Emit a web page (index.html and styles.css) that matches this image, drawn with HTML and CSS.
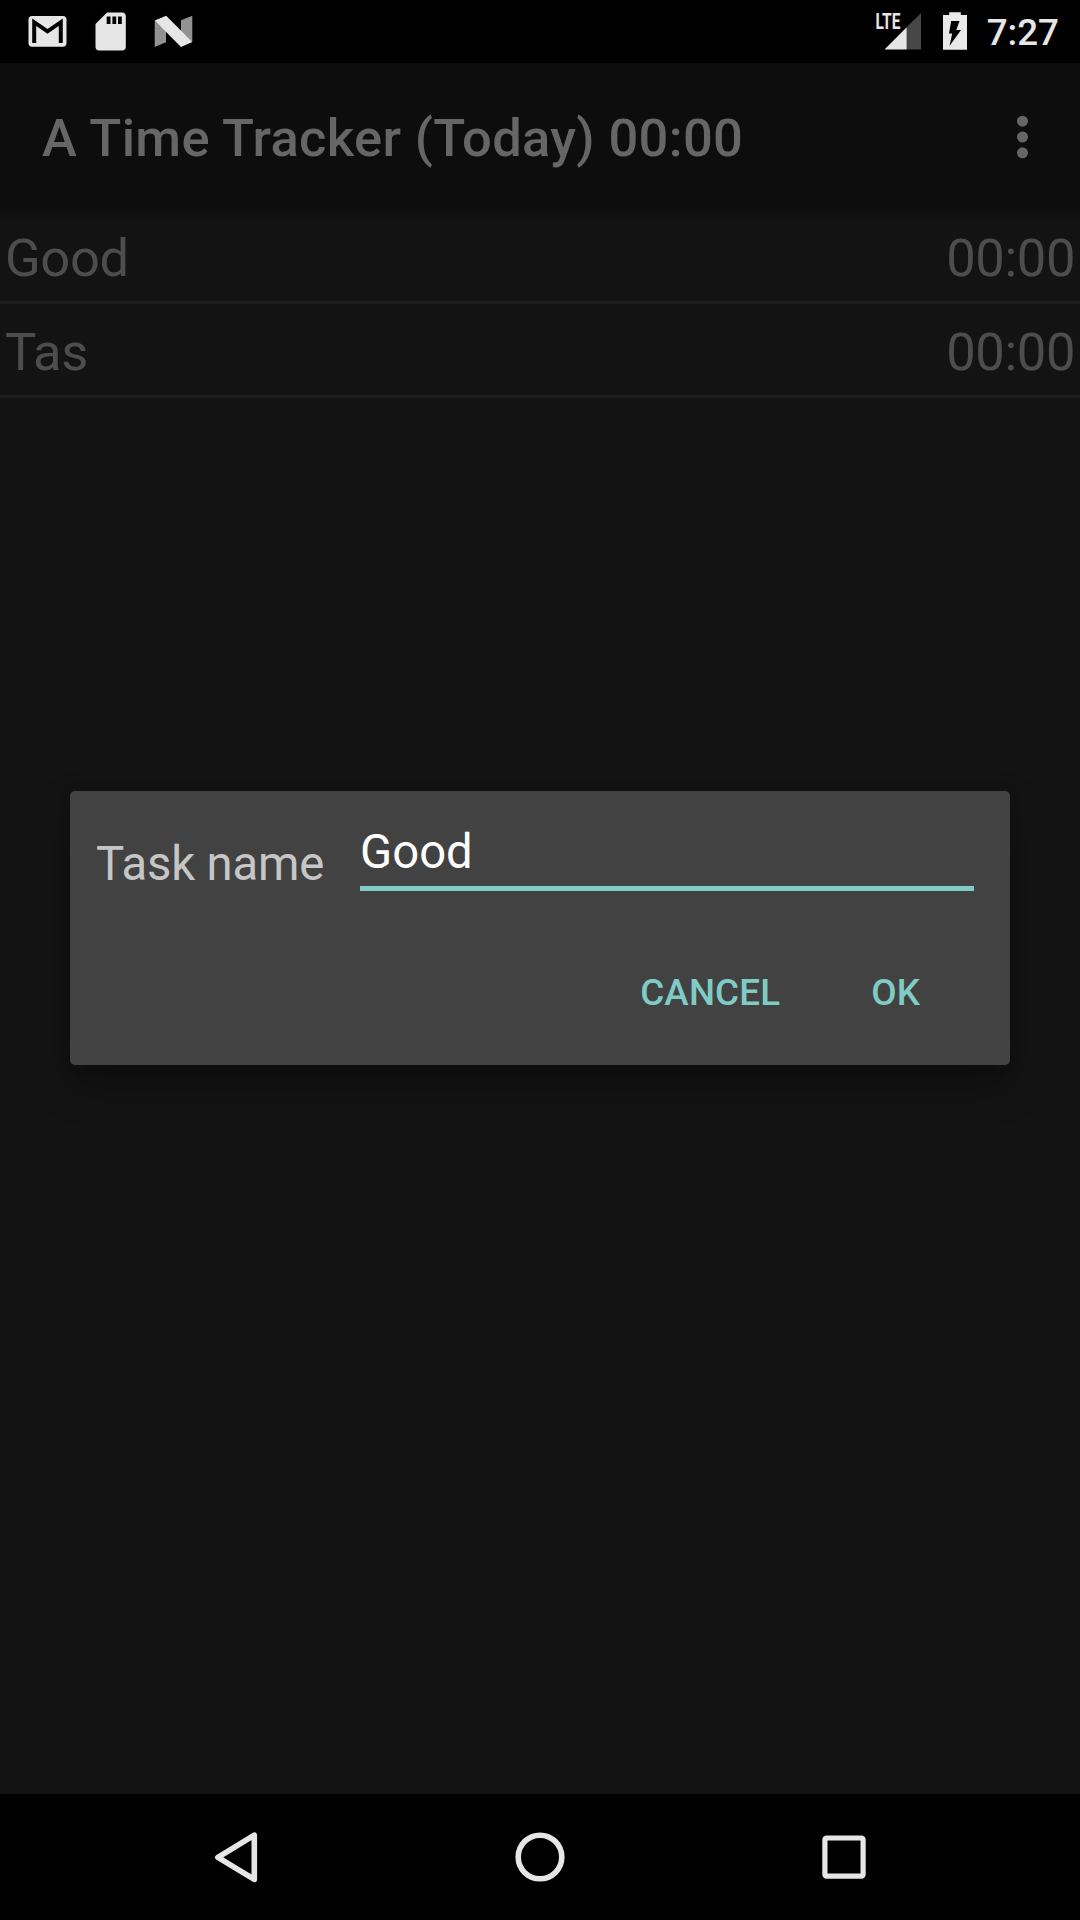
FILE: index.html
```html
<!DOCTYPE html>
<html lang="en">
<head>
<meta charset="utf-8">
<title>A Time Tracker</title>
<link rel="stylesheet" href="styles.css">
</head>
<body>
<div class="screen">
  <header class="status">
    <svg width="210" height="63" viewBox="0 0 210 63" aria-hidden="true">
      <rect x="28.5" y="16" width="38" height="30.7" rx="3.6" fill="#e6e6e6"/>
      <path d="M34.2 43V22.2L47.5 31.4L60.8 22.2V43" fill="none" stroke="#000" stroke-width="4"/>
      <path d="M107 12.5H122Q125.8 12.5 125.8 16.3V46.7Q125.8 50.5 122 50.5H99.3Q95.5 50.5 95.5 46.7V24Z" fill="#e6e6e6"/>
      <path d="M106.7 16.5H110.5V24H106.7ZM112.4 16.5H116.2V24H112.4ZM118 16.5H121.8V24H118Z" fill="#000"/>
      <path d="M154.7 20.5L166 31V42.3L154.7 47ZM181 20.3L192.3 15.8V42L181 33Z" fill="#929292"/>
      <path d="M154.7 20.5L166.2 15.8L192.3 42L181 47Z" fill="#e6e6e6"/>
    </svg>
    <div class="status-right">
      <svg width="110" height="63" viewBox="870 0 110 63" aria-hidden="true">
        <path d="M921 13V49.6H906.7V27.3Z" fill="#474747"/>
        <path d="M884.5 49.6L906.7 27.3V49.6Z" fill="#e6e6e6"/>
        <text class="lte" x="875.4" y="29" textLength="25" lengthAdjust="spacingAndGlyphs">LTE</text>
        <path d="M949.2 12.3H960.8V15H967V49.8H943V15H949.2Z" fill="#e9e9e9"/>
        <path d="M951.2 21H959.5L956.3 30H961L949.5 46L952.2 33.5H949Z" fill="#000"/>
      </svg>
      <span class="clock">7:27</span>
    </div>
  </header>
  <div class="appbar">
    <h1 class="title">A Time Tracker (Today) 00:00</h1>
    <svg class="overflow" width="12" height="44" viewBox="0 0 12 44" aria-hidden="true">
      <circle cx="6.5" cy="6.2" r="5.5"/><circle cx="6.5" cy="22" r="5.5"/><circle cx="6.5" cy="37.8" r="5.5"/>
    </svg>
  </div>
  <main class="content">
    <ul class="tasks">
      <li class="task"><span>Good</span><span>00:00</span></li>
      <li class="task"><span>Tas</span><span>00:00</span></li>
    </ul>
  </main>
  <nav class="nav">
    <svg width="1080" height="126" viewBox="0 0 1080 126" aria-hidden="true" fill="none" stroke="#e6e6e6">
      <path d="M254.3 41.2V85.4L217.9 63.3Z" stroke-width="5.6" stroke-linejoin="round"/>
      <circle cx="540" cy="63" r="21.8" stroke-width="5.6"/>
      <rect x="824.9" y="44" width="38.2" height="38.2" rx="1.6" stroke-width="5.2"/>
    </svg>
  </nav>
  <section class="dialog" role="dialog">
    <div class="field">
      <label class="label" for="name">Task name</label>
      <input class="input" id="name" value="Good">
    </div>
    <div class="actions">
      <button class="button">CANCEL</button>
      <button class="button">OK</button>
    </div>
  </section>
</div>
</body>
</html>
```
FILE: styles.css
```css
* { box-sizing: border-box; }
body { margin: 0; background: #000; font-family: Roboto, sans-serif; }
.screen {
  position: relative;
  display: flex;
  flex-direction: column;
  width: 1080px;
  height: 1920px;
  overflow: hidden;
  background: #131313;
}
svg { display: block; flex: none; }
.status {
  display: flex;
  justify-content: space-between;
  height: 63px;
  padding-right: 21px;
  background: #000;
}
.status-right { display: flex; gap: 5px; }
.lte { font: 700 21.6px Roboto, sans-serif; fill: #e6e6e6; }
.clock {
  width: 74px;
  padding-top: 1px;
  font-size: 36.75px;
  font-weight: 500;
  line-height: 63px;
  text-align: right;
  color: #e6e6e6;
}
.appbar {
  display: flex;
  align-items: center;
  justify-content: space-between;
  height: 147px;
  padding: 0 52px 0 42px;
  background: #0d0d0d;
  box-shadow: 0 3px 8px rgba(0, 0, 0, .3);
}
.title {
  margin: 0;
  padding-top: 3px;
  font-size: 52.5px;
  font-weight: 500;
  line-height: 62px;
  letter-spacing: .33px;
  color: #666;
}
.overflow { fill: #666; }
.content { flex: 1; }
.tasks { margin: 0; padding: 0; list-style: none; }
.task {
  display: flex;
  align-items: center;
  justify-content: space-between;
  height: 94px;
  padding: 4px 5px 0;
  border-bottom: 3px solid #1d1d1d;
  font-size: 52.5px;
  line-height: 62px;
  letter-spacing: -.4px;
  color: #4d4d4d;
}
.nav { height: 126px; background: #000; }
.dialog {
  position: absolute;
  left: 70px;
  top: 791px;
  width: 940px;
  height: 274px;
  padding: 28px 36px 0 26px;
  border-radius: 5px;
  background: #424242;
  box-shadow: 0 20px 40px rgba(0, 0, 0, .28), 0 0 12px rgba(0, 0, 0, .12);
}
.field { display: flex; justify-content: space-between; height: 72px; }
.label {
  padding-top: 17px;
  font-size: 47.25px;
  line-height: 56px;
  letter-spacing: -.15px;
  color: #c6c6c6;
}
.input {
  width: 614px;
  height: 72px;
  padding: 0 0 2px;
  border: 0;
  border-bottom: 5px solid #80cbc4;
  background: none;
  outline: 0;
  font: 47.25px/56px Roboto, sans-serif;
  color: #fff;
}
.actions {
  display: flex;
  justify-content: flex-end;
  gap: 91px;
  margin-top: 80px;
  padding-right: 54px;
}
.button {
  padding: 0;
  border: 0;
  background: none;
  font: 500 36.75px/44px Roboto, sans-serif;
  letter-spacing: .15px;
  color: #80cbc4;
}
```
